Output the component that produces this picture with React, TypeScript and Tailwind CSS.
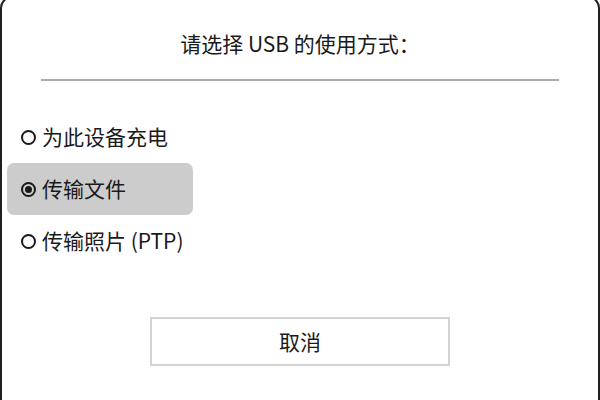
import { useState } from 'react'

const options = [
  { id: 'charge', label: '为此设备充电' },
  { id: 'mtp', label: '传输文件' },
  { id: 'ptp', label: '传输照片 (PTP)' },
]

function Radio({ checked }: { checked: boolean }) {
  return (
    <span className="flex h-[15px] w-[15px] shrink-0 items-center justify-center rounded-full border-2 border-[#1a1a1a]">
      {checked && <span className="h-[7px] w-[7px] rounded-full bg-[#1a1a1a]" />}
    </span>
  )
}

export default function App() {
  const [selected, setSelected] = useState('mtp')

  return (
    <div
      className="h-[400px] w-[600px] overflow-hidden bg-white text-[#1a1a1a]"
      style={{ fontFamily: '"Noto Sans CJK SC", "Noto Sans", sans-serif' }}
    >
      <div className="-mt-[4px] flex h-[420px] flex-col rounded-[12px] border-2 border-[#1f1f1f]">
        <h1 className="mt-[31px] text-center text-[21px] leading-[28px]">
          请选择 USB 的使用方式：
        </h1>
        <div className="mx-[39px] mt-[22px] h-[2px] bg-[#ababab]" />

        <div className="mt-[30px] flex flex-col">
          {options.map((o) => (
            <button
              key={o.id}
              onClick={() => setSelected(o.id)}
              className={
                selected === o.id
                  ? 'ml-[5px] flex h-[52px] w-[186px] items-center gap-[6px] rounded-[7px] bg-[#cccccc] pl-[14px] text-left text-[21px]'
                  : 'ml-[5px] flex h-[52px] w-[186px] items-center gap-[6px] rounded-[7px] pl-[14px] text-left text-[21px]'
              }
            >
              <Radio checked={selected === o.id} />
              <span className="whitespace-nowrap">{o.label}</span>
            </button>
          ))}
        </div>

        <button className="mx-auto mt-[50px] flex h-[49px] w-[300px] items-center justify-center border-2 border-[#d4d4d4] text-[21px]">
          取消
        </button>
      </div>
    </div>
  )
}
